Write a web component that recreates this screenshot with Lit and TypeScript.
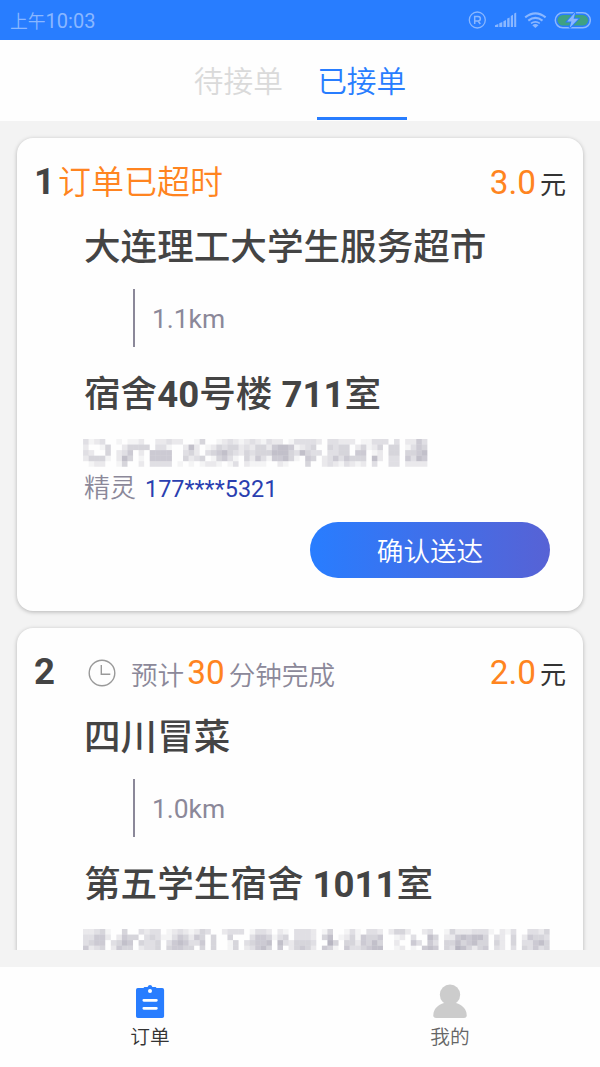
import { LitElement, html, svg, css, nothing } from "lit";
import { customElement, property } from "lit/decorators.js";

interface Order {
  no: number;
  late: boolean;
  minutes?: number;
  fee: string;
  shop: string;
  distance: string;
  dest: string;
  mask: string[];
  contact?: string;
  phone?: string;
}

const CELL = 50 / 9;

const ORDERS: Order[] = [
  {
    no: 1,
    late: true,
    fee: "3.0",
    shop: "大连理工大学生服务超市",
    distance: "1.1km",
    dest: "宿舍40号楼 711室",
    mask: [
      "31230010112002232200140012321232132201333320332220113330302253",
      "20014002444403310026201243442324425665123400434402412404401354",
      "32004023502055550034203456432434446664364330334405501204404456",
      "24441026401055550042340145310425315564105402353544406203305365",
      "01220014002033330101012210130211100210004002321321203003302222",
    ],
    contact: "精灵",
    phone: "177****5321",
  },
  {
    no: 2,
    late: false,
    minutes: 30,
    fee: "2.0",
    shop: "四川冒菜",
    distance: "1.0km",
    dest: "第五学生宿舍 1011室",
    mask: [
      "223410040032330123212430023330133202103332014001310332024420023001422233310213003324",
      "335520254403431135425404004000355413403332046012415445001203006402256566403204025443",
      "345503465043340356533504001403455606324443007404425464002005305304464564404204033564",
      "523402544023340455440404001402356405024542054105334566001201056504376424503203043534",
    ],
  },
];

@customElement("mosaic-line")
class MosaicLine extends LitElement {
  @property({ attribute: false }) rows: string[] = [];
  static styles = css`
    :host { display: block; }
    svg { display: block; }
  `;
  render() {
    const w = (this.rows[0] ?? "").length * CELL;
    const h = this.rows.length * CELL;
    return html`<svg width=${w} height=${h} viewBox="0 0 ${w} ${h}">
      ${this.rows.map((row, y) =>
        [...row].map((c, x) =>
          c === "0"
            ? nothing
            : svg`<rect x=${x * CELL} y=${y * CELL} width=${CELL} height=${CELL} fill="#6f6b83" fill-opacity=${Number(c) * 0.07}></rect>`
        )
      )}
    </svg>`;
  }
}

@customElement("order-card")
class OrderCard extends LitElement {
  @property({ attribute: false }) order!: Order;
  static styles = css`
    :host { display: block; flex: none; background: #fefefe; border-radius: 16px; box-shadow: 0 1px 4px rgba(0, 0, 0, 0.26); }
    .head { display: flex; align-items: baseline; height: 88px; line-height: 87px; padding: 0 17px 0 17px; white-space: nowrap; }
    .no { font-size: 36.6px; font-weight: 700; color: #444; }
    .no.wide { width: 53.5px; }
    .late { margin-left: 3px; font-size: 33px; color: #ff8420; font-weight: 350; }
    .clock { width: 28px; height: 28px; margin-right: 15.5px; align-self: center; position: relative; top: 1px; }
    .eta { font-size: 26.6px; color: #8b8899; font-weight: 350; position: relative; top: 1px; }
    .hot { font-size: 33.3px; color: #ff8420; margin: 0 4px 0 3px; }
    .fee { margin-left: auto; font-size: 26px; color: #333; }
    .fee .hot { margin: 0 4px 0 0; }
    .body { padding: 0 33px 33px 67px; }
    .title { height: 40px; line-height: 44px; font-size: 36.6px; font-weight: 500; color: #444; white-space: nowrap; }
    .title b { font-weight: 700; }
    .route { display: flex; align-items: center; height: 58px; margin: 23px 0 26px 49px; border-left: 2px solid #8b8899; padding-left: 17px; font-size: 26.4px; color: #8b8899; line-height: 58px; }
    .route span { padding-top: 2px; }
    .mask { margin: 26px 0 0 -0.7px; height: 27.8px; }
    .contact { display: flex; align-items: baseline; height: 42px; line-height: 43px; font-size: 26px; color: #8b8899; font-weight: 350; }
    .phone { font-size: 23.4px; font-weight: 400; color: #2a3fb0; margin-left: 9px; }
    .btn { display: block; width: 240px; height: 56px; margin: 13px 0 0 auto; border: 0; padding: 3px 0 0; border-radius: 28px; background: linear-gradient(90deg, #287dff, #5762d5); color: #fff; font: 350 26.6px/53px Roboto, "Noto Sans CJK SC", sans-serif; }
  `;

  private title(text: string) {
    return text.split(/(\d+)/).map((p) => (/^\d+$/.test(p) ? html`<b>${p}</b>` : p));
  }

  render() {
    const o = this.order;
    return html`
      <div class="head">
        <span class="no ${o.late ? "" : "wide"}">${o.no}</span>
        ${o.late
          ? html`<span class="late">订单已超时</span>`
          : html`<svg class="clock" viewBox="0 0 28 28" fill="none" stroke="#999" stroke-width="1.4">
                <circle cx="14" cy="14" r="12.8" /><path d="M13.3 6v9.3h9" />
              </svg>
              <span class="eta">预计</span><span class="hot">${o.minutes}</span><span class="eta">分钟完成</span>`}
        <span class="fee"><span class="hot">${o.fee}</span>元</span>
      </div>
      <div class="body">
        <div class="title">${this.title(o.shop)}</div>
        <div class="route"><span>${o.distance}</span></div>
        <div class="title">${this.title(o.dest)}</div>
        <mosaic-line class="mask" .rows=${o.mask}></mosaic-line>
        ${o.phone
          ? html`<div class="contact"><span>${o.contact}</span><span class="phone">${o.phone}</span></div>
              <button class="btn">确认送达</button>`
          : nothing}
      </div>
    `;
  }
}

@customElement("app-root")
class AppRoot extends LitElement {
  static styles = css`
    :host { display: flex; flex-direction: column; width: 600px; height: 1067px; overflow: hidden; background: #f3f3f3; font-family: Roboto, "Noto Sans CJK SC", sans-serif; }
    .status { display: flex; align-items: center; flex: none; height: 40px; padding: 0 9px 0 10px; background: #287dff; color: #8ab7ff; }
    .time { display: flex; align-items: baseline; flex: 1; font-size: 20px; line-height: 38px; font-weight: 400; padding-top: 2px; }
    .time .cn { font-size: 17.8px; font-weight: 350; }
    .status svg { display: block; }
    .tabs { display: flex; justify-content: center; gap: 33.4px; flex: none; height: 81px; box-sizing: border-box; background: #fefefe; }
    .tab { box-sizing: border-box; width: 90px; height: 80px; line-height: 84px; text-align: center; font-size: 29.7px; font-weight: 350; color: #dadada; }
    .tab.on { color: #287dff; border-bottom: 3px solid #287dff; }
    .list { display: flex; flex-direction: column; gap: 17px; height: 829px; box-sizing: border-box; overflow: hidden; padding: 17px 17px 0; flex: none; }
    .nav { display: flex; flex: none; margin-top: 17px; height: 100px; background: #fefefe; }
    .item { flex: 1; display: flex; flex-direction: column; align-items: center; padding-top: 17px; font-size: 19.7px; line-height: 30px; color: #666; font-weight: 350; }
    .item.on { color: #333; }
    .item svg { display: block; margin-bottom: 4px; }
  `;

  render() {
    return html`
      <div class="status">
        <div class="time"><span class="cn">上午</span><span>10:03</span></div>
        <svg width="123" height="20" viewBox="468 10 123 20" fill="none" stroke="#8ab7ff">
          <circle cx="477.3" cy="20" r="8" stroke-width="1.3" />
          <path d="M474.7 24v-7.5h3.4a2 2 0 0 1 0 4.5h-3.4M478 21l2.3 3" stroke-width="1.5" />
          <g fill="#8ab7ff" stroke="none">
            <path d="M495 25.3l3.3-1.4V27H495zM499.3 23.3l3-1.2V27h-3zM503.4 21.2l2.6-1.2v7h-2.6zM507.2 18.6l2.4-1.2V27h-2.4zM510.800 16l2.2-1.2V27h-2.200zM514.200 13.500l2-1.100V27h-2z" />
            <path d="M532.300 25.200q3.100-2.200 6.200 0l-3.100 2.900z" />
          </g>
          <path d="M525.200 17.400q10.200-8 20.400 0M528.300 20.600q7.100-5.300 14.200 0" stroke-width="2.100" />
          <path d="M531 23.400q4.400-3 8.800 0" stroke-width="1.600" />
          <rect x="555.300" y="12.800" width="35" height="15" rx="7.500" stroke-width="1.500" />
          <rect x="557.500" y="15" width="30.600" height="10.600" rx="5.300" fill="#3fa183" stroke="none" />
          <path d="M575.200 12.200l-8.100 9.300h4.300l-1.800 6.600 8.800-9.400h-4.800z" fill="#8ab7ff" stroke="#287dff" stroke-width="1.800" paint-order="stroke" />
        </svg>
      </div>
      <div class="tabs">
        <div class="tab">待接单</div>
        <div class="tab on">已接单</div>
      </div>
      <div class="list">${ORDERS.map((o) => html`<order-card .order=${o}></order-card>`)}</div>
      <div class="nav">
        <div class="item on">
          <svg width="34" height="35" viewBox="0 0 34 35">
            <path d="M4.8 4h5.6l1-1h3.2l.9-1.4q1.500-1.200 3 0l.9 1.400h3.200l1 1h5.600q1.900 0 1.900 1.900v26.300q0 1.800-1.900 1.800H4.800Q3 34 3 32.200V5.900Q3 4 4.800 4z" fill="#287dff" />
            <circle cx="17" cy="6.900" r="2" fill="#fff" />
            <path d="M10.800 16.300h12.600M10.800 24.300h12.600" stroke="#fff" stroke-width="2.700" stroke-linecap="round" />
          </svg>
          <span>订单</span>
        </div>
        <div class="item">
          <svg width="34" height="35" viewBox="0 0 34 35" fill="#ccc">
            <circle cx="17" cy="10.700" r="10.200" />
            <path d="M11 19h12c6 1.700 10.700 6 10.700 12.300q0 2.700-2.700 2.700H3Q.3 34 .3 31.300C.3 25 5 20.700 11 19z" />
          </svg>
          <span>我的</span>
        </div>
      </div>
    `;
  }
}
